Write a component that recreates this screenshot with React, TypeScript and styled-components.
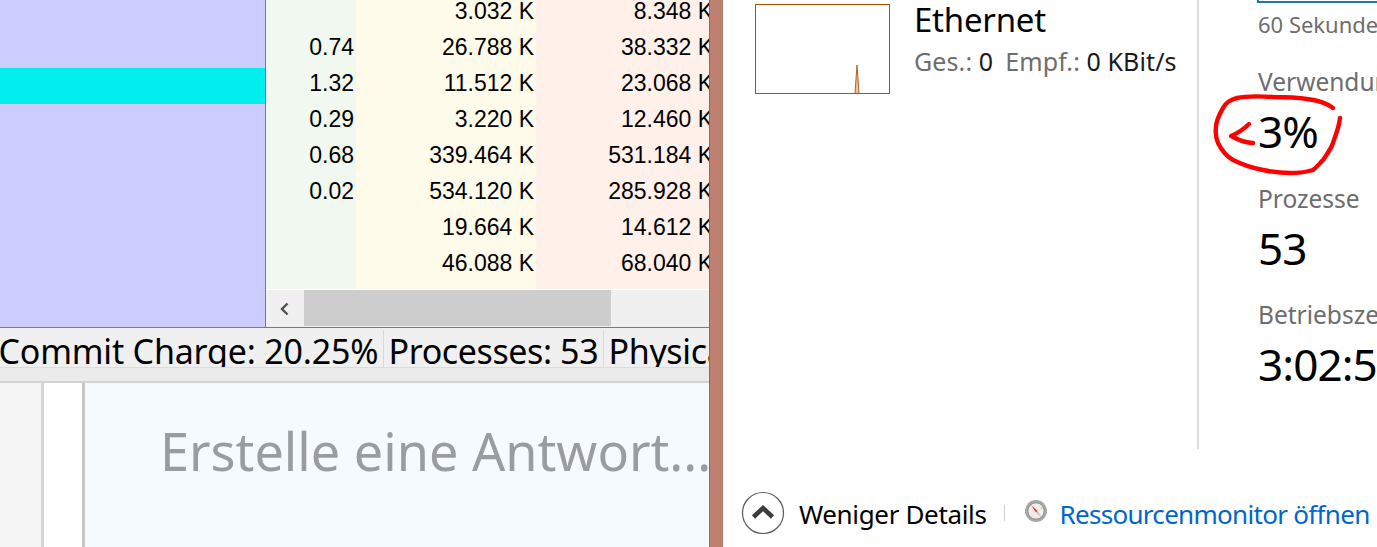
import React from "react";
import styled, { createGlobalStyle } from "styled-components";

const Global = createGlobalStyle`
  html, body { margin: 0; padding: 0; background: #fff; overflow: hidden; }
  #root { width: 1377px; height: 547px; }
`;

const UI = `"Noto Sans", "Open Sans", sans-serif`;

const Page = styled.div`
  position: relative;
  display: flex;
  width: 1377px;
  height: 547px;
  overflow: hidden;
  font-family: ${UI};
`;

const LeftPane = styled.div`
  width: 709px;
  flex: none;
  display: flex;
  flex-direction: column;
  overflow: hidden;
`;

const Divider = styled.div`
  width: 14px;
  flex: none;
  background: #be8070;
  border-left: 1px solid #8c6a60;
  box-sizing: border-box;
`;

const RightPane = styled.div`
  flex: 1;
  min-width: 0;
  display: flex;
  flex-direction: column;
  background: #fff;
  overflow: hidden;
`;

const ProcessArea = styled.div`
  height: 327px;
  flex: none;
  display: flex;
  border-bottom: 1px solid #7a7a7a;
  box-sizing: content-box;
`;

const Sidebar = styled.div`
  width: 265px;
  flex: none;
  background: #ccccff;
  border-right: 1px solid #7a7a7a;
  padding-top: 68px;
  box-sizing: content-box;
`;

const SelectedBar = styled.div`
  height: 36px;
  background: #00eeee;
`;

const TableWrap = styled.div`
  flex: 1;
  min-width: 0;
  display: flex;
  flex-direction: column;
  overflow: hidden;
`;

const Table = styled.div`
  height: 290px;
  flex: none;
  display: flex;
  overflow: hidden;
  background: #fff;
`;

const Column = styled.div<{ $bg: string; $w: number }>`
  width: ${(p) => p.$w}px;
  flex: none;
  height: 289px;
  background: ${(p) => p.$bg};
  box-sizing: border-box;
  padding-right: 2px;
  overflow: hidden;
`;

const Cells = styled.div`
  margin-top: -7px;
`;

const Cell = styled.div`
  height: 36px;
  line-height: 36px;
  text-align: right;
  white-space: nowrap;
  font-family: "Liberation Sans", Arial, sans-serif;
  font-size: 23px;
  color: #000;
`;

const Scrollbar = styled.div`
  height: 37px;
  flex: none;
  display: flex;
  background: #f0f0f0;
`;

const ScrollArrow = styled.div`
  width: 38px;
  flex: none;
  display: flex;
  align-items: center;
  justify-content: center;
`;

const ScrollThumb = styled.div`
  width: 307px;
  height: 36px;
  background: #cdcdcd;
`;

const StatusBar = styled.div`
  height: 40px;
  flex: none;
  display: flex;
  background: #f0f0f0;
  overflow: hidden;
  border-bottom: 1px solid #dcdcdc;
  box-sizing: border-box;
`;

const StatusCell = styled.div<{ $w: number; $pad: number; $track: number }>`
  width: ${(p) => p.$w}px;
  flex: none;
  box-sizing: border-box;
  padding-left: ${(p) => p.$pad}px;
  margin-top: 2px;
  height: 38px;
  border-right: 1px solid #d8d8d8;
  font-size: 34px;
  line-height: 42px;
  letter-spacing: ${(p) => p.$track}px;
  text-indent: -1.5px;
  color: #000;
  white-space: nowrap;
  overflow: hidden;
`;

const Strip = styled.div`
  height: 13px;
  flex: none;
  background: #ebebeb;
  border-bottom: 2px solid #d3d3d3;
`;

const Composer = styled.div`
  flex: 1;
  display: flex;
  min-height: 0;
`;

const Gutter = styled.div`
  width: 41px;
  flex: none;
  background: #f5f5f5;
  border-right: 3px solid #d6d6d6;
`;

const Margin = styled.div`
  width: 38px;
  flex: none;
  background: #fff;
  border-right: 3px solid #c6c6c6;
`;

const Editor = styled.div`
  flex: 1;
  background: #f5faff;
  padding: 32px 0 0 75px;
  font-size: 52.2px;
  line-height: 72px;
  color: #9a9d9f;
  white-space: nowrap;
  overflow: hidden;
`;

const Main = styled.div`
  height: 449px;
  flex: none;
  display: flex;
`;

const NetworkColumn = styled.div`
  width: 476px;
  flex: none;
  box-sizing: border-box;
  border-right: 2px solid #dcdcdc;
  padding: 4px 0 0 32px;
  display: flex;
  gap: 24px;
  align-items: flex-start;
`;

const NetworkGraph = styled.div`
  width: 135px;
  height: 90px;
  flex: none;
  box-sizing: border-box;
  border: 1px solid #a85400;
  display: flex;
`;

const NetworkInfo = styled.div`
  display: flex;
  flex-direction: column;
  margin-top: -4px;
`;

const NetworkName = styled.div`
  font-size: 33px;
  line-height: 40px;
  color: #000;
  letter-spacing: -0.25px;
`;

const NetworkStats = styled.div`
  margin-top: 3px;
  display: flex;
  gap: 12px;
  font-size: 25px;
  line-height: 36px;
  letter-spacing: 0.1px;
  white-space: nowrap;
`;

const StatGroup = styled.span`
  color: #6d6d6d;
`;

const StatValue = styled.span`
  color: #1a1a1a;
`;

const DetailColumn = styled.div`
  flex: 1;
  min-width: 0;
  padding-left: 59px;
  display: flex;
  flex-direction: column;
  overflow: hidden;
`;

const GraphEdge = styled.div`
  height: 3px;
  flex: none;
  border-bottom: 2px solid #1f74b4;
  border-left: 2px solid #1f74b4;
  box-sizing: border-box;
  margin-left: -1px;
`;

const Caption = styled.div`
  margin-top: 6px;
  font-size: 22px;
  line-height: 30px;
  color: #6d6d6d;
  white-space: nowrap;
`;

const MetricLabel = styled.div<{ $top: number }>`
  margin-top: ${(p) => p.$top}px;
  font-size: 24.5px;
  line-height: 32px;
  color: #6d6d6d;
  white-space: nowrap;
`;

const MetricValue = styled.div`
  font-size: 44px;
  line-height: 52px;
  letter-spacing: -0.9px;
  margin-top: 7px;
  color: #000;
  white-space: nowrap;
`;

const Footer = styled.div`
  flex: 1;
  display: flex;
  align-items: center;
  padding: 30px 0 0 18px;
  box-sizing: border-box;
`;

const CollapseIcon = styled.svg`
  width: 44px;
  height: 44px;
  flex: none;
`;

const FooterLabel = styled.span`
  margin: 2px 0 0 14px;
  font-size: 26px;
  line-height: 36px;
  letter-spacing: -0.35px;
  color: #000;
  white-space: nowrap;
`;

const FooterSep = styled.span`
  width: 1px;
  height: 16px;
  flex: none;
  margin: 0 19px 0 17px;
  background: #cfcfcf;
`;

const Compass = styled.svg`
  width: 24px;
  height: 24px;
  flex: none;
  margin-top: -4px;
`;

const MonitorLink = styled.span`
  margin: 2px 0 0 12px;
  font-size: 26px;
  line-height: 36px;
  letter-spacing: -0.7px;
  color: #0066cc;
  white-space: nowrap;
`;

const Scribble = styled.svg`
  position: absolute;
  left: 1205px;
  top: 90px;
  width: 145px;
  height: 90px;
  pointer-events: none;
`;

const col1 = ["", "0.74", "1.32", "0.29", "0.68", "0.02", "", ""];
const col2 = ["3.032 K", "26.788 K", "11.512 K", "3.220 K", "339.464 K", "534.120 K", "19.664 K", "46.088 K"];
const col3 = ["8.348 K", "38.332 K", "23.068 K", "12.460 K", "531.184 K", "285.928 K", "14.612 K", "68.040 K"];

const Values = ({ items }: { items: string[] }) => (
  <Cells>
    {items.map((v, i) => (
      <Cell key={i}>{v || "\u00a0"}</Cell>
    ))}
  </Cells>
);

export default function App() {
  return (
    <Page>
      <Global />
      <LeftPane>
        <ProcessArea>
          <Sidebar>
            <SelectedBar />
          </Sidebar>
          <TableWrap>
            <Table>
              <Column $bg="#f0f8f0" $w={90}>
                <Values items={col1} />
              </Column>
              <Column $bg="#fffbeb" $w={180}>
                <Values items={col2} />
              </Column>
              <Column $bg="#fff0ea" $w={179}>
                <Values items={col3} />
              </Column>
            </Table>
            <Scrollbar>
              <ScrollArrow>
                <svg width="12" height="16" viewBox="0 0 12 16">
                  <path d="M8.5 2.5 3 8l5.5 5.5" fill="none" stroke="#505050" strokeWidth="2.4" />
                </svg>
              </ScrollArrow>
              <ScrollThumb />
            </Scrollbar>
          </TableWrap>
        </ProcessArea>
        <StatusBar>
          <StatusCell $w={384} $pad={0} $track={-0.2}>Commit Charge: 20.25%</StatusCell>
          <StatusCell $w={220} $pad={6} $track={-0.4}>Processes: 53</StatusCell>
          <StatusCell $w={200} $pad={6} $track={-0.35}>Physical Memory</StatusCell>
        </StatusBar>
        <Strip />
        <Composer>
          <Gutter />
          <Margin />
          <Editor>Erstelle eine Antwort...</Editor>
        </Composer>
      </LeftPane>
      <Divider />
      <RightPane>
        <Main>
          <NetworkColumn>
            <NetworkGraph>
              <svg width="133" height="88" viewBox="0 0 133 88">
                <path d="M99 88 L101 60 L103 88" fill="#e9c2a0" stroke="#b8621a" strokeWidth="1" />
              </svg>
            </NetworkGraph>
            <NetworkInfo>
              <NetworkName>Ethernet</NetworkName>
              <NetworkStats>
                <StatGroup>Ges.: <StatValue>0</StatValue></StatGroup>
                <StatGroup>Empf.: <StatValue>0 KBit/s</StatValue></StatGroup>
              </NetworkStats>
            </NetworkInfo>
          </NetworkColumn>
          <DetailColumn>
            <GraphEdge />
            <Caption>60 Sekunden</Caption>
            <MetricLabel $top={27}>Verwendung</MetricLabel>
            <MetricValue>3%</MetricValue>
            <MetricLabel $top={26}>Prozesse</MetricLabel>
            <MetricValue>53</MetricValue>
            <MetricLabel $top={25}>Betriebszeit</MetricLabel>
            <MetricValue>3:02:56</MetricValue>
          </DetailColumn>
        </Main>
        <Footer>
          <CollapseIcon viewBox="0 0 44 44">
            <circle cx="22" cy="22" r="20.5" fill="#fff" stroke="#5a5a5a" strokeWidth="1.2" />
            <path d="M12.5 26 22 17l9.5 9" fill="none" stroke="#3c3c3c" strokeWidth="4.5" />
          </CollapseIcon>
          <FooterLabel>Weniger Details</FooterLabel>
          <FooterSep />
          <Compass viewBox="0 0 24 24">
            <circle cx="12" cy="12" r="11" fill="#a8a8a8" />
            <circle cx="12" cy="12" r="8.2" fill="#f1ece6" stroke="#7d7d7d" strokeWidth="0.8" />
            <path d="M7 6l6.5 6-1.5 1.5z" fill="#d8322a" />
            <path d="M17 18l-5-4.5 1.5-1.5z" fill="#bdbdbd" />
            <path d="M17 8l1.5 1-1 1z" fill="#d98a4a" />
          </Compass>
          <MonitorLink>Ressourcenmonitor öffnen</MonitorLink>
        </Footer>
      </RightPane>
      <Scribble viewBox="1205 90 145 90">
        <g fill="none" stroke="#ff0000" strokeWidth="4.4" strokeLinecap="round" strokeLinejoin="round">
          <path d="M1333 108C1325 102 1316 100 1307 99C1295 97 1285 97 1273 97C1258 96 1246 96 1237 98C1229 100 1226 103 1223 108C1219 115 1216 121 1216 127C1215 134 1216 138 1218 143C1222 151 1226 156 1233 160C1243 165 1252 168 1263 170C1272 172 1281 173 1290 173C1299 173 1307 172 1313 170C1317 167 1320 163 1323 160C1327 154 1331 149 1333 143C1335 136 1339 128 1340 118" />
          <path d="M1249 124C1244 129 1238 133 1231 136C1237 139 1243 143 1253 143" />
        </g>
      </Scribble>
    </Page>
  );
}
